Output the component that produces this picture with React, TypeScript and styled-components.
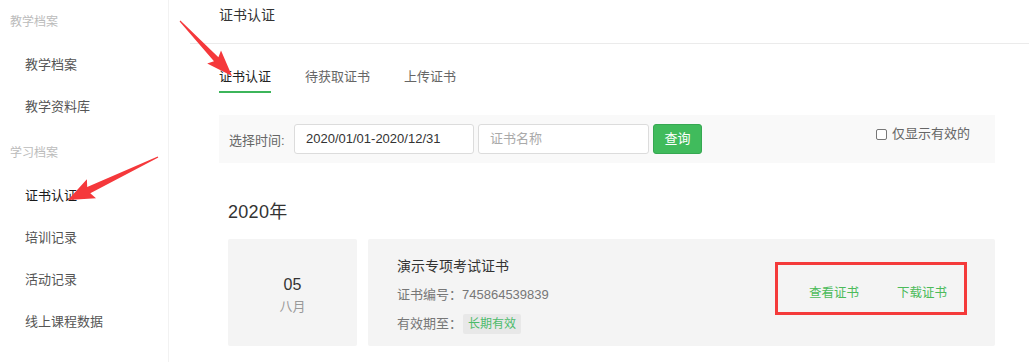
import React from "react";
import styled, { createGlobalStyle } from "styled-components";

const Global = createGlobalStyle`
  html, body { margin: 0; padding: 0; background: #fff; }
  body { font-family: "Liberation Sans", "Noto Sans CJK SC", sans-serif; }
  * { box-sizing: border-box; }
`;

const Page = styled.div`
  position: relative;
  display: flex;
  width: 1029px;
  height: 362px;
  overflow: hidden;
  background: #fff;
`;

const Sidebar = styled.aside`
  width: 169px;
  flex: none;
  border-right: 1px solid #f2f2f2;
  display: flex;
  flex-direction: column;
`;

const GroupLabel = styled.div<{ $gap?: number }>`
  height: 44px;
  line-height: 44px;
  margin-top: ${(p) => p.$gap ?? 0}px;
  padding-left: 10px;
  font-size: 12px;
  color: #bbbbbb;
`;

const NavItem = styled.div<{ $active?: boolean }>`
  height: 42px;
  line-height: 42px;
  padding-left: 25px;
  font-size: 13px;
  color: ${(p) => (p.$active ? "#1a1a1a" : "#555")};
`;

const Main = styled.main`
  flex: 1;
  padding-left: 21px;
  display: flex;
  flex-direction: column;
`;

const Header = styled.div`
  height: 44px;
  line-height: 30px;
  padding-left: 29px;
  border-bottom: 1px solid #ebebeb;
  font-size: 14px;
  color: #333;
`;

const Content = styled.div`
  padding: 0 34px 0 29px;
  display: flex;
  flex-direction: column;
`;

const Tabs = styled.div`
  display: flex;
  gap: 34px;
  padding-top: 23px;
`;

const Tab = styled.div<{ $active?: boolean }>`
  font-size: 13px;
  line-height: 20px;
  padding-bottom: 4px;
  color: ${(p) => (p.$active ? "#222" : "#666")};
  border-bottom: 2px solid ${(p) => (p.$active ? "#3cb55a" : "transparent")};
`;

const FilterBar = styled.div`
  margin-top: 22px;
  height: 48px;
  background: #f9f9f9;
  display: flex;
  align-items: center;
  padding: 0 25px 0 10px;
`;

const FilterLabel = styled.span`
  width: 65px;
  font-size: 13px;
  color: #666;
`;

const Input = styled.div<{ $w: number; $placeholder?: boolean }>`
  width: ${(p) => p.$w}px;
  height: 30px;
  margin-right: 4px;
  border: 1px solid #dcdcdc;
  border-radius: 3px;
  background: #fff;
  padding-left: 11px;
  line-height: 28px;
  font-size: 13px;
  color: ${(p) => (p.$placeholder ? "#aaa" : "#333")};
`;

const Button = styled.div`
  width: 49px;
  height: 30px;
  border: 1px solid #36a852;
  border-radius: 3px;
  background: #40bb5c;
  color: #fff;
  font-size: 13px;
  line-height: 28px;
  text-align: center;
`;

const CheckWrap = styled.label`
  margin-left: auto;
  align-self: flex-start;
  margin-top: 10px;
  display: flex;
  align-items: center;
  gap: 5px;
  font-size: 13px;
  color: #666;
  line-height: 18px;
`;

const CheckBox = styled.span`
  width: 11px;
  height: 11px;
  border: 1px solid #777;
  border-radius: 2px;
  background: #fff;
`;

const Year = styled.div`
  margin-top: 38px;
  padding-left: 9px;
  font-size: 18px;
  line-height: 22px;
  color: #333;
  letter-spacing: 0.3px;
`;

const Row = styled.div`
  margin-top: 16px;
  padding-left: 9px;
  display: flex;
  gap: 11px;
  height: 107px;
`;

const DateBox = styled.div`
  width: 129px;
  background: #f4f4f4;
  border-radius: 2px;
  display: flex;
  flex-direction: column;
  align-items: center;
  justify-content: center;
  padding-top: 7px;
`;

const Day = styled.div`
  font-size: 16px;
  line-height: 20px;
  color: #333;
`;

const Month = styled.div`
  font-size: 13px;
  line-height: 20px;
  color: #999;
  margin-top: 2px;
`;

const Card = styled.div`
  flex: 1;
  background: #f4f4f4;
  border-radius: 2px;
  display: flex;
  align-items: center;
  padding: 0 48px 0 29px;
`;

const Info = styled.div`
  display: flex;
  flex-direction: column;
  padding-top: 4px;
`;

const Title = styled.div`
  font-size: 14px;
  line-height: 20px;
  color: #333;
`;

const Meta = styled.div`
  margin-top: 9px;
  font-size: 13px;
  line-height: 20px;
  color: #777;
  display: flex;
  align-items: center;
`;

const Tag = styled.span`
  margin-left: 1px;
  padding: 0 5px;
  height: 20px;
  line-height: 20px;
  font-size: 12px;
  background: #e8e8e8;
  border-radius: 2px;
  color: #4cbb6a;
`;

const Actions = styled.div`
  position: relative;
  margin-left: auto;
  display: flex;
  gap: 38px;
  &::after {
    content: "";
    position: absolute;
    left: -34px;
    right: -20px;
    top: -21px;
    bottom: -12px;
    border: 3px solid #f43a3a;
  }
`;

const ActionLink = styled.span`
  font-size: 12.5px;
  line-height: 20px;
  color: #4cbb5a;
`;

const Overlay = styled.svg`
  position: absolute;
  left: 0;
  top: 0;
  pointer-events: none;
`;

function arrow(x1: number, y1: number, x2: number, y2: number, h: number, hw: number, sw: number) {
  const dx = x2 - x1;
  const dy = y2 - y1;
  const L = Math.hypot(dx, dy);
  const ux = dx / L;
  const uy = dy / L;
  const nx = -uy;
  const ny = ux;
  const bx = x2 - ux * h;
  const by = y2 - uy * h;
  const pts: [number, number][] = [
    [x1 + nx * 0.6, y1 + ny * 0.6],
    [bx + nx * sw / 2, by + ny * sw / 2],
    [bx - ux * 3 + nx * hw / 2, by - uy * 3 + ny * hw / 2],
    [x2, y2],
    [bx - ux * 3 - nx * hw / 2, by - uy * 3 - ny * hw / 2],
    [bx - nx * sw / 2, by - ny * sw / 2],
    [x1 - nx * 0.6, y1 - ny * 0.6],
  ];
  return pts.map((p) => p.map((v) => v.toFixed(1)).join(",")).join(" ");
}

export default function App() {
  return (
    <>
      <Global />
      <Page>
        <Sidebar>
          <GroupLabel>教学档案</GroupLabel>
          <NavItem>教学档案</NavItem>
          <NavItem>教学资料库</NavItem>
          <GroupLabel $gap={3}>学习档案</GroupLabel>
          <NavItem $active>证书认证</NavItem>
          <NavItem>培训记录</NavItem>
          <NavItem>活动记录</NavItem>
          <NavItem>线上课程数据</NavItem>
        </Sidebar>
        <Main>
          <Header>证书认证</Header>
          <Content>
            <Tabs>
              <Tab $active>证书认证</Tab>
              <Tab>待获取证书</Tab>
              <Tab>上传证书</Tab>
            </Tabs>
            <FilterBar>
              <FilterLabel>选择时间:</FilterLabel>
              <Input $w={180}>2020/01/01-2020/12/31</Input>
              <Input $w={171} $placeholder>证书名称</Input>
              <Button>查询</Button>
              <CheckWrap>
                <CheckBox />
                仅显示有效的
              </CheckWrap>
            </FilterBar>
            <Year>2020年</Year>
            <Row>
              <DateBox>
                <Day>05</Day>
                <Month>八月</Month>
              </DateBox>
              <Card>
                <Info>
                  <Title>演示专项考试证书</Title>
                  <Meta>证书编号：745864539839</Meta>
                  <Meta>
                    有效期至：<Tag>长期有效</Tag>
                  </Meta>
                </Info>
                <Actions>
                  <ActionLink>查看证书</ActionLink>
                  <ActionLink>下载证书</ActionLink>
                </Actions>
              </Card>
            </Row>
          </Content>
        </Main>
        <Overlay width={1029} height={362} viewBox="0 0 1029 362">
          <polygon points={arrow(180, 21, 232, 76, 23, 19, 6)} fill="#f5383b" />
          <polygon points={arrow(158, 157, 68, 200, 23, 21, 7)} fill="#f5383b" />
        </Overlay>
      </Page>
    </>
  );
}
